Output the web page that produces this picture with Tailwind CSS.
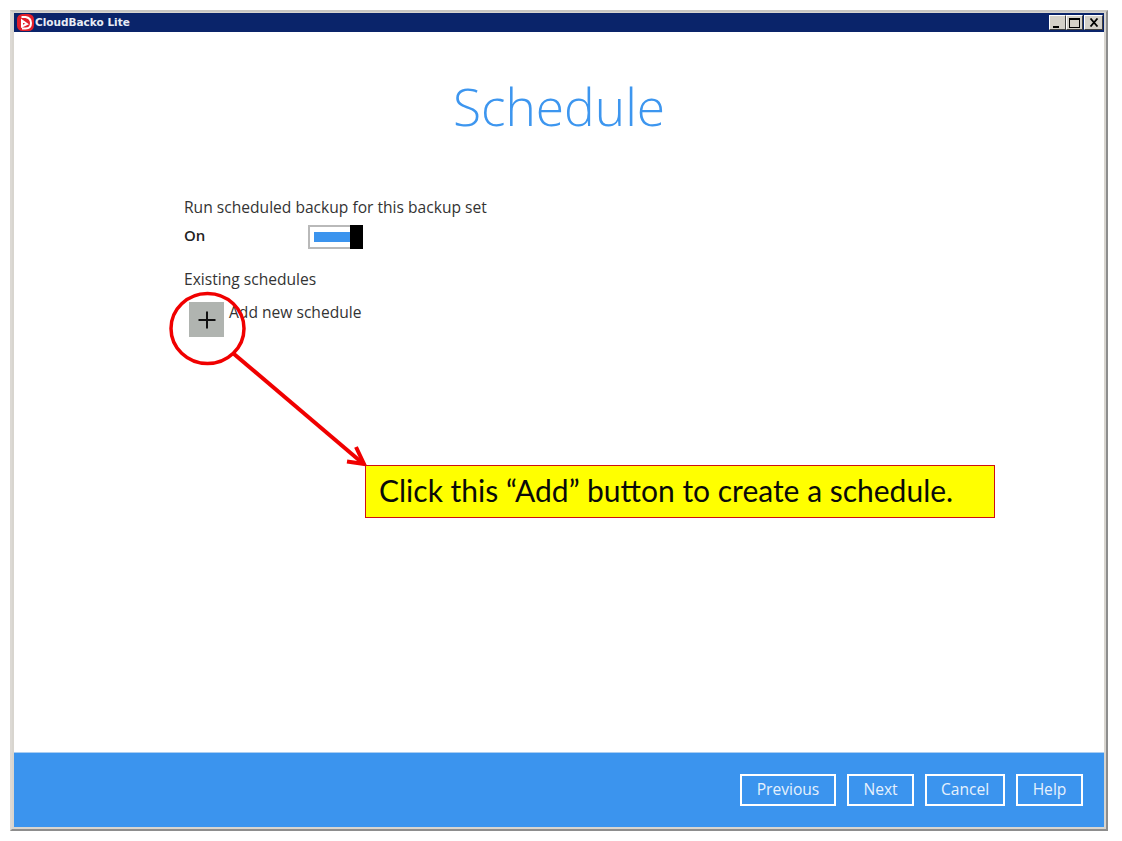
<!DOCTYPE html>
<html>
<head>
<meta charset="utf-8">
<script src="https://cdn.jsdelivr.net/npm/@tailwindcss/browser@4"></script>
</head>
<body class="bg-white">
<div class="relative w-[1122px] h-[841px] overflow-hidden bg-white font-['Open_Sans',sans-serif]">
  <div class="absolute left-[10px] top-[10px] w-[1098px] h-[821px] bg-[#d8d5cf] border-2 border-t-[#c8c6c2] border-l-[#dcd9d4] border-r-[#8d8d8d] border-b-[#8d8d8d] pt-[1px] px-[2px] pb-[2px] flex flex-col">
    <div class="h-[19px] shrink-0 bg-[#0a246a] flex items-center justify-between pl-[3px] pr-[1px]">
      <div class="flex items-center gap-[1px]">
        <svg width="17" height="17" viewBox="0 0 17 17"><rect x="0" y="0" width="17" height="17" rx="5.5" fill="#e3202a"/><path d="M4.5 3 L8.5 3 Q14 4 14 9 Q14 14.5 8.5 14.5 L5 14.5 M5 6.5 L10 10 L5 12.5 Z" fill="none" stroke="#fff" stroke-width="2"/></svg>
        <span class="font-['DejaVu_Sans',sans-serif] font-bold text-[10.5px] leading-none text-[#e8ecf5]">CloudBacko Lite</span>
      </div>
      <div class="flex items-center">
        <div class="w-[17px] h-[15px] bg-[#d4d0c8] border border-t-white border-l-white border-r-[#404040] border-b-[#404040] flex items-end justify-center pb-[1px] pr-[3px]"><div class="w-[6px] h-[2px] bg-black"></div></div>
        <div class="w-[17px] h-[15px] bg-[#d4d0c8] border border-t-white border-l-white border-r-[#404040] border-b-[#404040] flex items-center justify-center"><div class="w-[11px] h-[10px] border border-t-2 border-black"></div></div>
        <div class="ml-[1px] w-[19px] h-[15px] bg-[#d4d0c8] border border-t-white border-l-white border-r-[#404040] border-b-[#404040] flex items-center justify-center">
          <svg width="10" height="9" viewBox="0 0 10 9"><path d="M1.5 0.5 L8.5 8.5 M8.5 0.5 L1.5 8.5" stroke="#000" stroke-width="1.8"/></svg>
        </div>
      </div>
    </div>
    <div class="flex-1 bg-white flex flex-col">
      <div class="flex-1 flex flex-col">
        <h1 class="mt-[40px] text-center font-light text-[51.5px] leading-[68px] text-[#3d96ef]">Schedule</h1>
        <div class="ml-[170px] mt-[57px] text-[15.6px] leading-5 text-[#333]">
          <div>Run scheduled backup for this backup set</div>
          <div class="mt-[8px] flex items-center h-[24px]">
            <span class="w-[124px] font-semibold text-[15px] text-[#222] -mt-[4px]">On</span>
            <div class="relative w-[55px] h-[24px] bg-white border-2 border-[#b9b9b9] pl-[4px] pt-[5px]">
              <div class="w-[38px] h-[10px] bg-[#3b94ee]"></div>
              <div class="absolute right-[-2px] top-[-2px] w-[13px] h-[24px] bg-black"></div>
            </div>
          </div>
          <div class="mt-[20px]">Existing schedules</div>
          <div class="mt-[13px] flex items-start">
            <div class="ml-[5px] w-[35px] h-[35px] bg-[#b0b4b0] flex items-center justify-center">
              <svg width="18" height="18" viewBox="0 0 18 18"><path d="M9 0.5 V17.5 M0.5 9 H17.5" stroke="#111" stroke-width="2"/></svg>
            </div>
            <span class="ml-[5px]">Add new schedule</span>
          </div>
        </div>
      </div>
      <div class="h-[75px] shrink-0 bg-[#3b94ee] border-t border-[#a9cdf2] flex items-center justify-end gap-[11px] pr-[21px] text-[15.6px] text-[#e6f1fd]">
        <button class="w-[96px] h-[32px] border-2 border-white">Previous</button>
        <button class="w-[67px] h-[32px] border-2 border-white">Next</button>
        <button class="w-[80px] h-[32px] border-2 border-white">Cancel</button>
        <button class="w-[67px] h-[32px] border-2 border-white">Help</button>
      </div>
    </div>
  </div>

  <svg class="absolute left-0 top-0 pointer-events-none" width="1122" height="841" viewBox="0 0 1122 841">
    <ellipse cx="207.5" cy="328.5" rx="36.5" ry="35" fill="none" stroke="#f00000" stroke-width="3.5"/>
    <path d="M234 354 L363 463.5" fill="none" stroke="#f00000" stroke-width="4"/>
    <path d="M356 447 L364 464 L347 461.5" fill="none" stroke="#f00000" stroke-width="4"/>
  </svg>

  <div class="absolute left-[365px] top-[465px] w-[630px] h-[53px] bg-[#ffff00] border border-[#d01010] flex items-center pl-[13px] pb-[3px] font-['Lato',sans-serif] text-[#0a0a0a] text-[30px] leading-none whitespace-nowrap">Click this “Add” button to create a schedule.</div>
</div>
</body>
</html>
